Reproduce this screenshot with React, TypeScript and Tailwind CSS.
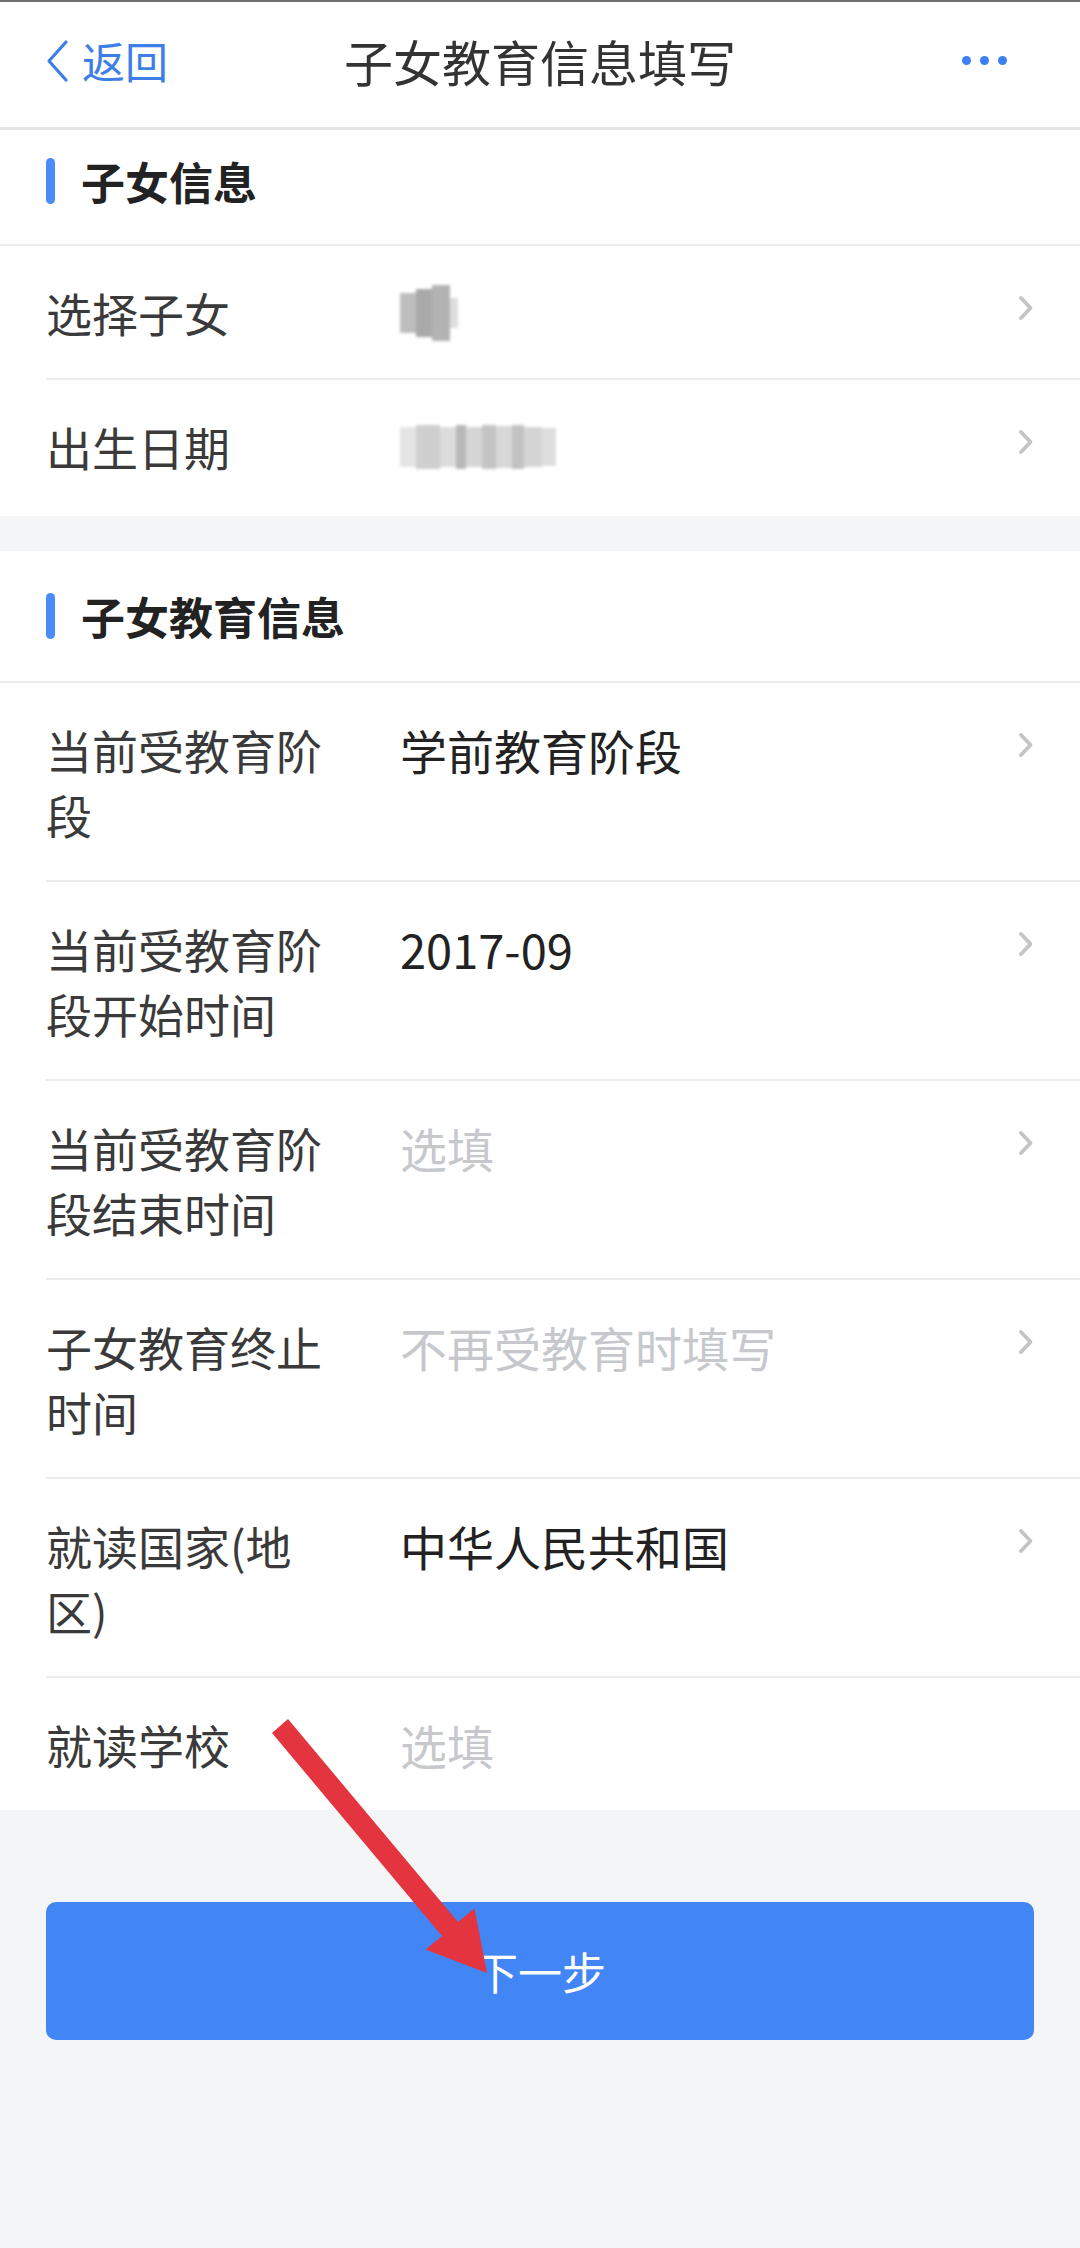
import React from 'react';

const font = { fontFamily: '"Noto Sans CJK SC", "Noto Sans", sans-serif' };

interface RowProps {
  label: string;
  value?: React.ReactNode;
  placeholder?: string;
  first?: boolean;
  arrow?: boolean;
}

function Chevron() {
  return (
    <svg width="16" height="26" viewBox="0 0 16 26" className="shrink-0">
      <path d="M3 3 L12.5 13 L3 23" fill="none" stroke="#c4c4c4" strokeWidth="3.8" strokeLinecap="round" strokeLinejoin="round" />
    </svg>
  );
}

function Row({ label, value, placeholder, first, arrow = true }: RowProps) {
  return (
    <div className="pl-[46px] bg-white">
      <div className={`flex items-start pr-[46px] pt-[34px] pb-[33px] leading-[65px] ${first ? '' : 'border-t-2 border-[#ececec]'}`}>
        <div className="w-[284px] shrink-0 text-[46px] text-[#3a3a3a]">{label}</div>
        <div className="ml-[70px] flex-1 text-[47px]">
          {value ? <span className="text-[#222]">{value}</span> : <span className="text-[#c6c8cc]">{placeholder}</span>}
        </div>
        {arrow && (
          <div className="h-[56px] flex items-center">
            <Chevron />
          </div>
        )}
      </div>
    </div>
  );
}

function SectionTitle({ title, className }: { title: string; className: string }) {
  return (
    <div className={`${className} bg-white border-b-2 border-[#ececec] flex items-center pl-[46px]`}>
      <div className="w-[9px] h-[46px] rounded-full bg-[#4a8cf7]" />
      <div className="ml-[26px] text-[44px] font-bold text-[#222]">{title}</div>
    </div>
  );
}

// pixelated redaction block
function Blur({ cells }: { cells: [number, number, string][] }) {
  return (
    <div className="flex items-center h-[65px] blur-[1.5px]">
      {cells.map(([w, h, c], i) => (
        <div key={i} style={{ width: w, height: h, background: c }} />
      ))}
    </div>
  );
}

export default function App() {
  return (
    <div className="relative w-[1080px] min-h-[2248px] bg-[#f4f5f7] overflow-hidden" style={font}>
      {/* Nav bar */}
      <div className="h-[130px] pb-[8px] bg-white border-t-2 border-[#6e6e6e] border-b-[3px] border-b-[#e6e6e6] grid grid-cols-[1fr_auto_1fr] items-center">
        <div className="flex items-center pl-[44px] text-[#3d7ee8]">
          <svg width="26" height="44" viewBox="0 0 26 44">
            <path d="M22 3 L5 22 L22 41" fill="none" stroke="#3d7ee8" strokeWidth="3.2" strokeLinecap="round" strokeLinejoin="round" />
          </svg>
          <span className="ml-[12px] text-[43px]">返回</span>
        </div>
        <div className="text-[49px] text-[#333]">子女教育信息填写</div>
        <div className="flex justify-end items-center gap-[9px] pr-[73px]">
          <span className="w-[9px] h-[9px] rounded-full bg-[#3b7ff0]" />
          <span className="w-[9px] h-[9px] rounded-full bg-[#3b7ff0]" />
          <span className="w-[9px] h-[9px] rounded-full bg-[#3b7ff0]" />
        </div>
      </div>

      {/* Section 1 */}
      <SectionTitle title="子女信息" className="h-[116px] pb-[12px]" />
      <Row
        first
        label="选择子女"
        value={<Blur cells={[[16, 40, '#bdbdbd'], [16, 48, '#a9a9a9'], [18, 56, '#b3b3b3'], [8, 30, '#dedede']]} />}
      />
      <Row
        label="出生日期"
        value={
          <Blur
            cells={[
              [16, 40, '#e4e4e4'], [24, 44, '#cfcfcf'], [16, 40, '#dcdcdc'], [10, 44, '#b8b8b8'],
              [16, 40, '#d6d6d6'], [14, 44, '#c4c4c4'], [16, 42, '#d8d8d8'], [12, 44, '#c2c2c2'],
              [18, 40, '#d4d4d4'], [14, 38, '#dedede'],
            ]}
          />
        }
      />
      <div className="h-[4px] bg-white" />

      {/* Section 2 */}
      <div className="mt-[35px]">
        <SectionTitle title="子女教育信息" className="h-[132px]" />
        <Row first label="当前受教育阶段" value="学前教育阶段" />
        <Row label="当前受教育阶段开始时间" value="2017-09" />
        <Row label="当前受教育阶段结束时间" placeholder="选填" />
        <Row label="子女教育终止时间" placeholder="不再受教育时填写" />
        <Row label="就读国家(地区)" value="中华人民共和国" />
        <Row label="就读学校" placeholder="选填" arrow={false} />
      </div>

      {/* Next button */}
      <div className="px-[46px] pt-[92px]">
        <button className="w-full h-[138px] rounded-[10px] bg-[#4285f4] text-white text-[44px]">下一步</button>
      </div>

      {/* Red annotation arrow */}
      <svg className="absolute inset-0 pointer-events-none" width="1080" height="2248" viewBox="0 0 1080 2248">
        <polygon
          points="288,1719 458,1922 474.5,1908.5 487,1973 425.5,1949.5 442,1936 272,1733"
          fill="#e3343f"
        />
      </svg>
    </div>
  );
}
